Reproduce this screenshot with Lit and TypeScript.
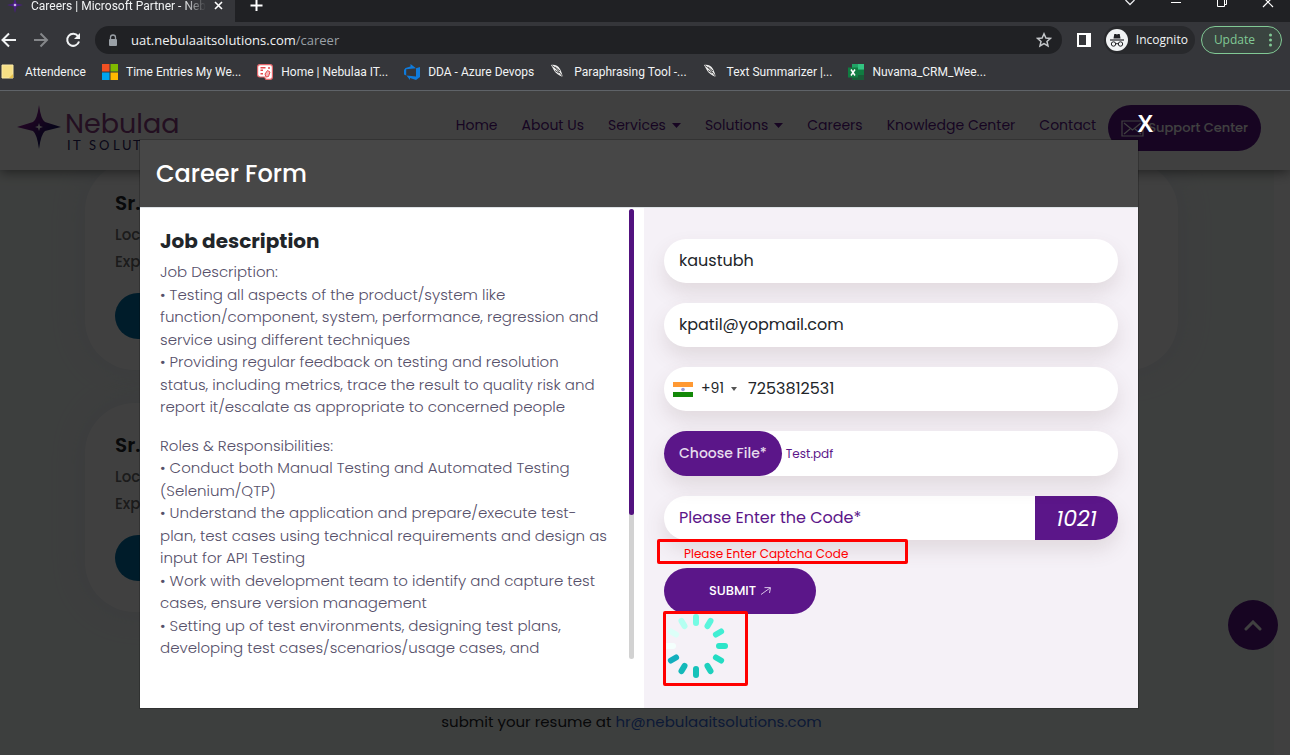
import { LitElement, html, svg, css } from "lit";
import { customElement, state } from "lit/decorators.js";

const bookmarkIcons = {
  note: svg`<path d="M1 1h11v13H1z" fill="#f6df85" stroke="#fbe9a6"/><path d="M8 14h4v-4z" fill="#e8c34d"/>`,
  windows: svg`<path d="M0 0h7.5v7.5H0z" fill="#f25022"/><path d="M8.500 0H16v7.500H8.500z" fill="#7fba00"/><path d="M0 8.500h7.500V16H0z" fill="#00a4ef"/><path d="M8.500 8.500H16V16H8.500z" fill="#ffb900"/>`,
  home: svg`<path d="M3 .6h10q2.400 0 2.400 2.400v10q0 2.400-2.400 2.400H9L7.500 13H3Q.6 13 .6 10.600V3Q.6.6 3 .6z" fill="#fff" stroke="#e5686c" stroke-width="1.200"/><path d="M3.500 3.800h5M3.500 6.200h2.500M3.500 9.800h2.500M11 4h2" stroke="#e5484d" stroke-width="1.600" fill="none"/><path d="m8 10 2.500-3.500L13 8l-1.500 4.500L9 13z" fill="#f4b9bb" stroke="#e5484d"/>`,
  devops: svg`<path d="M16 3v10l-4 3-6-2v2l-3.500-4.500L12 12.500V4.200zM12 4.200 6.500 0v2.500L1.500 4 0 6v4.500l2.200 1V5.300z" fill="#0f7bdc"/>`,
  quill: svg`<path d="M1 1c4-.6 7 .6 9 4 1.500 2.600 1.900 5 3 8C9 11.500 5 9 3.500 5.500z" fill="#ededed"/><path d="M2 1.500c4 2.500 7 6 11 11.500M5 3l5 4M5 6.500l4 2.500" stroke="#4c4c4c" stroke-width="1" fill="none"/>`,
  excel: svg`<path d="M4 0h12v16H4z" fill="#21a366"/><path d="M10 0h6v5h-6z" fill="#33c481"/><path d="M4 10h12v6H4z" fill="#185c37"/><path d="M10 6h6v5h-6z" fill="#107c41"/><path d="M0 3.500h10v10H0z" fill="#107c41"/><path d="m3 5.500 4 6m0-6-4 6" stroke="#fff" stroke-width="1.500"/>`,
};

const bookmarks: { icon: keyof typeof bookmarkIcons; label: string }[] = [
  { icon: "note", label: "Attendence" },
  { icon: "windows", label: "Time Entries My We..." },
  { icon: "home", label: "Home | Nebulaa IT..." },
  { icon: "devops", label: "DDA - Azure Devops" },
  { icon: "quill", label: "Paraphrasing Tool -..." },
  { icon: "quill", label: "Text Summarizer |..." },
  { icon: "excel", label: "Nuvama_CRM_Wee..." },
];

@customElement("browser-bar")
class BrowserBar extends LitElement {
  static styles = css`
    :host { display: block; background: #35363a; color: #f1f3f4; font: 12px/16px "Open Sans", "Noto Sans", sans-serif; border-bottom: 1px solid #5f6368; }
    button { font: inherit; color: inherit; background: none; border: 0; padding: 0; display: flex; align-items: center; }
    svg { display: block; flex: none; }
    .tabs { display: flex; height: 22px; background: #202124; overflow: hidden; }
    .tab { display: flex; align-items: flex-start; gap: 8px; width: 235px; box-sizing: border-box; padding: 0 12px 0 7px; background: #35363a; }
    .tab-title { flex: 1; white-space: nowrap; overflow: hidden; font-family: Roboto, sans-serif; line-height: 12px; height: 18px; mask-image: linear-gradient(90deg, #000 87%, transparent); }
    .rest { flex: 1; display: flex; align-items: flex-start; justify-content: space-between; background: #202124; border-bottom-left-radius: 8px; padding: 0 16px 0 15px; }
    .window { display: flex; gap: 34px; }
    .tools { display: flex; align-items: center; height: 36px; box-sizing: border-box; padding: 0 8px 0 0; }
    .arrows { display: flex; gap: 16px; padding-right: 14px; }
    .omni { flex: 1; display: flex; align-items: center; gap: 13px; height: 28px; border-radius: 14px; background: #202124; padding: 0 10px 0 13px; box-sizing: border-box; font-size: 13px; }
    .url { flex: 1; }
    .path { color: #9aa0a6; }
    .side { margin: 0 13px 0 15px; }
    .private { display: flex; align-items: center; gap: 8px; height: 28px; padding: 0 7px 0 2px; border-radius: 14px; background: #28292c; margin-right: 6px; }
    .update { height: 28px; box-sizing: border-box; border: 1px solid #81c995; border-radius: 14px; color: #81c995; background: #3a4440; padding: 0 8px 0 12px; gap: 13px; }
    .marks { display: flex; gap: 16px; height: 32px; box-sizing: border-box; padding: 0 0 4px 1px; overflow: hidden; font-family: Roboto, sans-serif; }
    .mark { display: flex; align-items: center; gap: 8px; color: inherit; text-decoration: none; white-space: nowrap; }
  `;
  render() {
    return html`
      <div class="tabs">
        <div class="tab">
          <svg width="16" height="13" viewBox="0 0 16 13"><path d="M8-3 9.500 3.500 16 5 9.500 6.500 8 13 6.500 6.500 0 5l6.500-1.500z" fill="#4b1d86"/><circle cx="8" cy="5" r="1.300" fill="#cbb8e6"/></svg>
          <span class="tab-title">Careers | Microsoft Partner - Nebulaa</span>
          <button aria-label="Close tab"><svg width="9" height="11" viewBox="0 0 9 11"><path d="m1 2 7 7m0-7L1 9" stroke="#fff" stroke-width="1.600"/></svg></button>
        </div>
        <div class="rest">
          <button aria-label="New tab"><svg width="13" height="12" viewBox="0 0 13 12"><path d="M6.500-1v12M.500 5.500h12" stroke="#fff" stroke-width="2"/></svg></button>
          <div class="window">
            <button aria-label="Search tabs"><svg width="12" height="11" viewBox="0 0 12 11"><path d="m1.500 0 4.500 4.500L10.500 0" fill="none" stroke="#e8eaed" stroke-width="1.300"/></svg></button>
            <button aria-label="Minimize"><svg width="12" height="11" viewBox="0 0 12 11"><path d="M1 2.500h10" stroke="#fff"/></svg></button>
            <button aria-label="Restore"><svg width="12" height="11" viewBox="0 0 12 11"><path d="M1.500-2h7v8.500h-7zM8 4.500h2.500V-2" fill="none" stroke="#fff"/></svg></button>
            <button aria-label="Close window"><svg width="12" height="11" viewBox="0 0 12 11"><path d="m1-3 10 10M11-3 1 7" stroke="#fff" stroke-width="1.200"/></svg></button>
          </div>
        </div>
      </div>
      <div class="tools">
        <div class="arrows">
          <button aria-label="Back"><svg width="17" height="16" viewBox="0 0 17 16"><path d="M16 8H3M9 1.500 2.500 8 9 14.500" fill="none" stroke="#f1f3f4" stroke-width="2"/></svg></button>
          <button aria-label="Forward"><svg width="16" height="16" viewBox="0 0 16 16"><path d="M1 8h12M7.500 1.500 14 8l-6.500 6.500" fill="none" stroke="#85878a" stroke-width="2"/></svg></button>
          <button aria-label="Reload"><svg width="16" height="16" viewBox="0 0 16 16"><path d="M13 4.200A6 6 0 1 0 14 9.500" fill="none" stroke="#f1f3f4" stroke-width="2"/><path d="M15 1v6H9z" fill="#f1f3f4"/></svg></button>
        </div>
        <div class="omni">
          <svg width="10" height="13" viewBox="0 0 10 13"><rect x="1" y="5" width="8" height="7" rx="1" fill="#9aa0a6"/><path d="M2.500 5V3.500a2.500 2.500 0 0 1 5 0V5" fill="none" stroke="#9aa0a6" stroke-width="1.300"/></svg>
          <span class="url">uat.nebulaaitsolutions.com<span class="path">/career</span></span>
          <button aria-label="Bookmark this page"><svg width="16" height="16" viewBox="0 0 16 16"><path d="m8 1.800 1.900 4.200 4.500.4-3.400 3 1 4.500-4-2.400-4 2.400 1-4.500-3.400-3L6.100 6z" fill="none" stroke="#c4c7ca" stroke-width="1.500"/></svg></button>
        </div>
        <button class="side" aria-label="Side panel"><svg width="14" height="14" viewBox="0 0 14 14"><path d="M1 1h12v12H1z" fill="none" stroke="#fff" stroke-width="2"/><path d="M9 1h4v12H9z" fill="#fff"/></svg></button>
        <div class="private">
          <svg width="22" height="22" viewBox="0 0 22 22"><circle cx="11" cy="11" r="11" fill="#f1f3f4"/><path d="M7.500 9.500 8.300 5h1.500l1.200.5 1.200-.5h1.500l.8 4.500z" fill="#202124"/><path d="M4 11h14" stroke="#202124" stroke-width="1.200"/><circle cx="7.500" cy="15" r="2.200" fill="none" stroke="#202124"/><circle cx="14.500" cy="15" r="2.200" fill="none" stroke="#202124"/><path d="M9.700 15q1.300-1 2.600 0" fill="none" stroke="#202124"/></svg>
          <span>Incognito</span>
        </div>
        <button class="update">Update<svg width="5" height="14" viewBox="0 0 5 14"><g fill="#81c995"><circle cx="2.500" cy="2" r="1.500"/><circle cx="2.500" cy="7" r="1.500"/><circle cx="2.500" cy="12" r="1.500"/></g></svg></button>
      </div>
      <nav class="marks">
        ${bookmarks.map((b) => html`<a class="mark" href="#"><svg width="16" height="16" viewBox="0 0 16 16">${bookmarkIcons[b.icon]}</svg>${b.label}</a>`)}
      </nav>
    `;
  }
}

@customElement("career-page")
class CareerPage extends LitElement {
  static styles = css`
    :host { display: block; height: 100%; position: relative; overflow: hidden; background: #fff; font-family: Poppins, Inter, sans-serif; }
    .top { position: absolute; inset: 0 0 auto; height: 79px; box-sizing: border-box; background: #fff; box-shadow: 0 2px 12px rgba(0, 0, 0, 0.5); display: flex; align-items: flex-start; justify-content: space-between; padding: 12px 29px 0 17px; z-index: 1; }
    .links { display: flex; align-items: center; gap: 24px; padding-top: 2px; }
    .link { display: flex; align-items: center; gap: 6px; color: #5b1689; font-size: 14px; line-height: 40px; padding-bottom: 6px; text-decoration: none; white-space: nowrap; }
    .support { display: flex; align-items: center; gap: 4px; height: 46px; margin-left: -12px; padding: 0 13px; border: 0; border-radius: 23px; background: #5b1689; color: #fff; font: 500 13px/20px Poppins, Inter, sans-serif; white-space: nowrap; }
    .jobs { height: 100%; margin-right: 16px; box-sizing: border-box; padding: 70px 96px 0 85px; background: #f4f9f6; display: grid; grid-template-columns: repeat(2, 1fr); grid-auto-rows: 209px; gap: 33px; align-content: start; }
    .job { background: #fff; border-radius: 50px; box-shadow: 0 0 32px rgba(226, 230, 242, 0.8); padding: 28px 30px; box-sizing: border-box; }
    .job-title { margin: 0 0 4px; font-size: 20px; line-height: 28px; font-weight: 600; color: #212529; }
    .fact { margin: 0; font-size: 15px; line-height: 27px; font-weight: 500; color: #6b6b6b; }
    .apply { width: 152px; height: 46px; margin-top: 18px; border: 0; border-radius: 23px; background: #006fa6; }
    .contact { grid-column: 1 / -1; margin: 0; padding-top: 65px; text-align: center; font-size: 15px; line-height: 24px; color: #212529; }
    .mail { color: #3569d8; text-decoration: none; }
    .to-top { position: absolute; right: 12px; bottom: 105px; width: 50px; height: 50px; border: 0; border-radius: 50%; background: #5b1689; padding: 0; display: grid; place-items: center; }
  `;
  render() {
    const caret = html`<svg width="9" height="5" viewBox="0 0 9 5"><path d="M0 0h9L4.500 5z" fill="#5b1689"/></svg>`;
    return html`
      <header class="top">
        <svg width="168" height="50" viewBox="0 0 168 50" role="img" aria-label="Nebulaa IT Solutions">
          <defs><linearGradient id="star" x1="0" y1="0" x2="1" y2="1"><stop offset=".3" stop-color="#7d1489"/><stop offset=".7" stop-color="#1b1464"/></linearGradient></defs>
          <path d="M22 2q2 15 6 17l16 5-16 4q-4 3-6 18-2-15-6-18L0 24l16-5q4-2 6-17z" fill="url(#star)"/>
          <path d="m22 20 1 3 3 1-3 1-1 3-1-3-3-1 3-1z" fill="#fff"/>
          <text x="48" y="30" font-family="Poppins, sans-serif" font-size="27" fill="#8a3d83">Nebulaa</text>
          <text x="50 56 64 72 82 96 105 116 126 131 143 155" y="47" font-family="Lato, sans-serif" font-size="13" fill="#28205f">IT SOLUTIONS</text>
        </svg>
        <nav class="links">
          <a class="link" href="#">Home</a><a class="link" href="#">About Us</a>
          <a class="link" href="#">Services ${caret}</a><a class="link" href="#">Solutions ${caret}</a>
          <a class="link" href="#">Careers</a><a class="link" href="#">Knowledge Center</a><a class="link" href="#">Contact</a>
          <button class="support"><svg width="23" height="17" viewBox="0 0 23 17"><path d="M1 1h21v15H1zM3 3l8.500 7L20 3M3 14l6-5m11 5-6-5" fill="none" stroke="#fff" stroke-width="1.200"/></svg>Support Center</button>
        </nav>
      </header>
      <main class="jobs">
        <article class="job"><h2 class="job-title">Sr.</h2><p class="fact">Loc</p><p class="fact">Exp</p><button class="apply" aria-label="Apply"></button></article>
        <article class="job"></article>
        <article class="job"><h2 class="job-title">Sr.</h2><p class="fact">Loc</p><p class="fact">Exp</p><button class="apply" aria-label="Apply"></button></article>
        <p class="contact">submit your resume at <a class="mail" href="#">hr@nebulaaitsolutions.com</a></p>
      </main>
      <button class="to-top" aria-label="Back to top"><svg width="18" height="11" viewBox="0 0 18 11"><path d="m2 9 7-7 7 7" fill="none" stroke="#fff" stroke-width="3" stroke-linecap="round"/></svg></button>
    `;
  }
}

const spokeColors = ["#75fbe4", "#59f5dc", "#40eed3", "#2de5c9", "#23dcc3", "#1dd0bd", "#16c2ba", "#13b9b9", "#12aebd", "#f4fffd", "#dcfff8", "#b4fff1"];

@customElement("career-dialog")
class CareerDialog extends LitElement {
  @state() fileName = "Test.pdf";

  static styles = css`
    :host { display: block; color: #212529; font-family: Poppins, Inter, sans-serif; font-size: 16px; }
    .dialog { position: relative; box-shadow: 0 0 0 1px rgba(0, 0, 0, 0.2); }
    .close { position: absolute; right: -15px; top: -34px; border: 0; background: none; padding: 0; color: #fff; font: 600 24px/34px "Noto Sans", sans-serif; }
    .head { background: #474747; border-bottom: 1px solid #dee2e6; padding: 16px 16px 15px; }
    .title { margin: 0; color: #fff; font-size: 24px; line-height: 36px; font-weight: 500; }
    .body { display: grid; grid-template-columns: 504fr 494fr; background: #fff; }
    .about { display: flex; padding: 0 10px 49px 20px; height: 451px; box-sizing: content-box; }
    .text { flex: 1; overflow: hidden; padding: 19px 20px 0 0; }
    .heading { margin: 0 0 6px; font-size: 20px; line-height: 28px; font-weight: 700; }
    .copy { margin: 0 0 16px; font-size: 15px; line-height: 1.5; font-weight: 300; color: #56506a; }
    .track { width: 5px; border-radius: 3px; background: #d2d2d2; margin-top: 1px; }
    .thumb { height: 68%; border-radius: 3px; background: #52127f; }
    .form { background: #f5f1f7; padding: 31px 20px 0; }
    .field { display: flex; align-items: center; height: 44px; border-radius: 22px; background: #fff; box-shadow: 0 10px 20px rgba(90, 60, 60, 0.13); margin-bottom: 20px; }
    .upload { height: 45px; position: relative; }
    .input { flex: 1; min-width: 0; height: 100%; box-sizing: border-box; padding: 0 15px 2px; border: 0; outline: 0; background: none; border-radius: 22px; font: inherit; color: inherit; }
    .input::placeholder { color: #5b1689; opacity: 1; }
    .flag { margin: 0 8px 0 9px; flex: none; }
    .dial { appearance: none; border: 0; background: none; padding: 0 0 2px; width: 30px; color: inherit; font: 14px/20px Poppins, Inter, sans-serif; }
    .phone { padding-left: 11px; }
    .choose { display: flex; align-items: center; align-self: stretch; padding: 0 15px; border-radius: 23px; background: #5b1689; color: #e6dced; font-size: 14px; font-weight: 500; margin-right: 4px; }
    .picker { position: absolute; width: 1px; height: 1px; opacity: 0; }
    .file { font-size: 12px; color: #5b1689; }
    .code { display: grid; place-items: center; align-self: stretch; width: 83px; border-radius: 0 22px 22px 0; background: #5b1689; color: #fff; font-size: 22px; font-style: italic; }
    .captcha { margin-bottom: 0; }
    .error { position: relative; margin: 0; padding: 5px 20px; color: #f00; font-size: 12px; line-height: 18px; }
    .mark { position: absolute; border: 3px solid #f00; border-radius: 2px; box-sizing: border-box; pointer-events: none; }
    .mark-error { left: -7px; top: -1px; width: 251px; height: 25px; }
    .submit { display: flex; align-items: center; justify-content: center; gap: 5px; width: 152px; height: 46px; border: 0; border-radius: 23px; background: #5b1689; color: #fff; font: 500 13px/18px Poppins, Inter, sans-serif; padding: 0; }
    .wait { position: relative; }
    .mark-wait { left: -1px; top: -3px; width: 85px; height: 75px; }
    svg { display: block; }
  `;

  private pick(e: Event) {
    this.fileName = (e.target as HTMLInputElement).files?.[0]?.name ?? this.fileName;
  }

  render() {
    return html`
      <section class="dialog" role="dialog" aria-labelledby="title">
        <button class="close" aria-label="Close">X</button>
        <header class="head"><h1 class="title" id="title">Career Form</h1></header>
        <div class="body">
          <div class="about">
            <div class="text">
              <h2 class="heading">Job description</h2>
              <p class="copy">
                Job Description:<br />• Testing all aspects of the product/system like<br />function/component, system, performance, regression and<br />service using different techniques<br />• Providing regular feedback on testing and resolution<br />status, including metrics, trace the result to quality risk and<br />report it/escalate as appropriate to concerned people
              </p>
              <p class="copy">
                Roles &amp; Responsibilities:<br />• Conduct both Manual Testing and Automated Testing<br />(Selenium/QTP)<br />• Understand the application and prepare/execute test-<br />plan, test cases using technical requirements and design as<br />input for API Testing<br />• Work with development team to identify and capture test<br />cases, ensure version management<br />• Setting up of test environments, designing test plans,<br />developing test cases/scenarios/usage cases, and
              </p>
            </div>
            <div class="track"><div class="thumb"></div></div>
          </div>
          <form class="form">
            <div class="field"><input class="input" aria-label="Name" value="kaustubh" /></div>
            <div class="field"><input class="input" aria-label="Email" type="email" value="kpatil@yopmail.com" /></div>
            <div class="field">
              <svg class="flag" width="20" height="15" viewBox="0 0 20 15"><path d="M0 0h20v15H0z" fill="#fff"/><path d="M0 0h20v5H0z" fill="#f93"/><path d="M0 10h20v5H0z" fill="#138808"/><circle cx="10" cy="7.500" r="1.800" fill="#9a9ad6"/></svg>
              <select class="dial" aria-label="Country code"><option>+91</option></select>
              <svg width="6" height="4" viewBox="0 0 6 4"><path d="M0 0h6L3 4z" fill="#555"/></svg>
              <input class="input phone" aria-label="Phone" type="tel" value="7253812531" />
            </div>
            <div class="field upload">
              <label class="choose" for="file">Choose File*</label><input class="picker" id="file" type="file" @change=${this.pick} />
              <span class="file">${this.fileName}</span>
            </div>
            <div class="field captcha">
              <input class="input" aria-label="Captcha code" placeholder="Please Enter the Code*" />
              <span class="code">1021</span>
            </div>
            <p class="error">Please Enter Captcha Code<span class="mark mark-error"></span></p>
            <button class="submit" type="button">SUBMIT<svg width="10" height="8" viewBox="0 0 10 8"><path d="M0 7.500 9 1M3.500.6h6L8.500 6" fill="none" stroke="#d8c4e6"/></svg></button>
            <div class="wait">
              <svg width="64" height="64" viewBox="0 0 64 64" role="img" aria-label="Loading">
                ${spokeColors.map((c, i) => svg`<rect x="29" y="0" width="6" height="12" rx="3" fill=${c} transform="rotate(${i * 30} 32 32)"/>`)}
              </svg>
              <span class="mark mark-wait"></span>
            </div>
          </form>
        </div>
      </section>
    `;
  }
}

@customElement("app-root")
class AppRoot extends LitElement {
  static styles = css`
    :host { display: flex; flex-direction: column; height: 100vh; overflow: hidden; }
    .view { flex: 1; min-height: 0; position: relative; }
    .backdrop { position: absolute; inset: 0; z-index: 2; background: rgba(0, 0, 0, 0.75); padding: 49px 152px 0 140px; }
  `;
  render() {
    return html`
      <browser-bar></browser-bar>
      <div class="view">
        <career-page></career-page>
        <div class="backdrop"><career-dialog></career-dialog></div>
      </div>
    `;
  }
}
